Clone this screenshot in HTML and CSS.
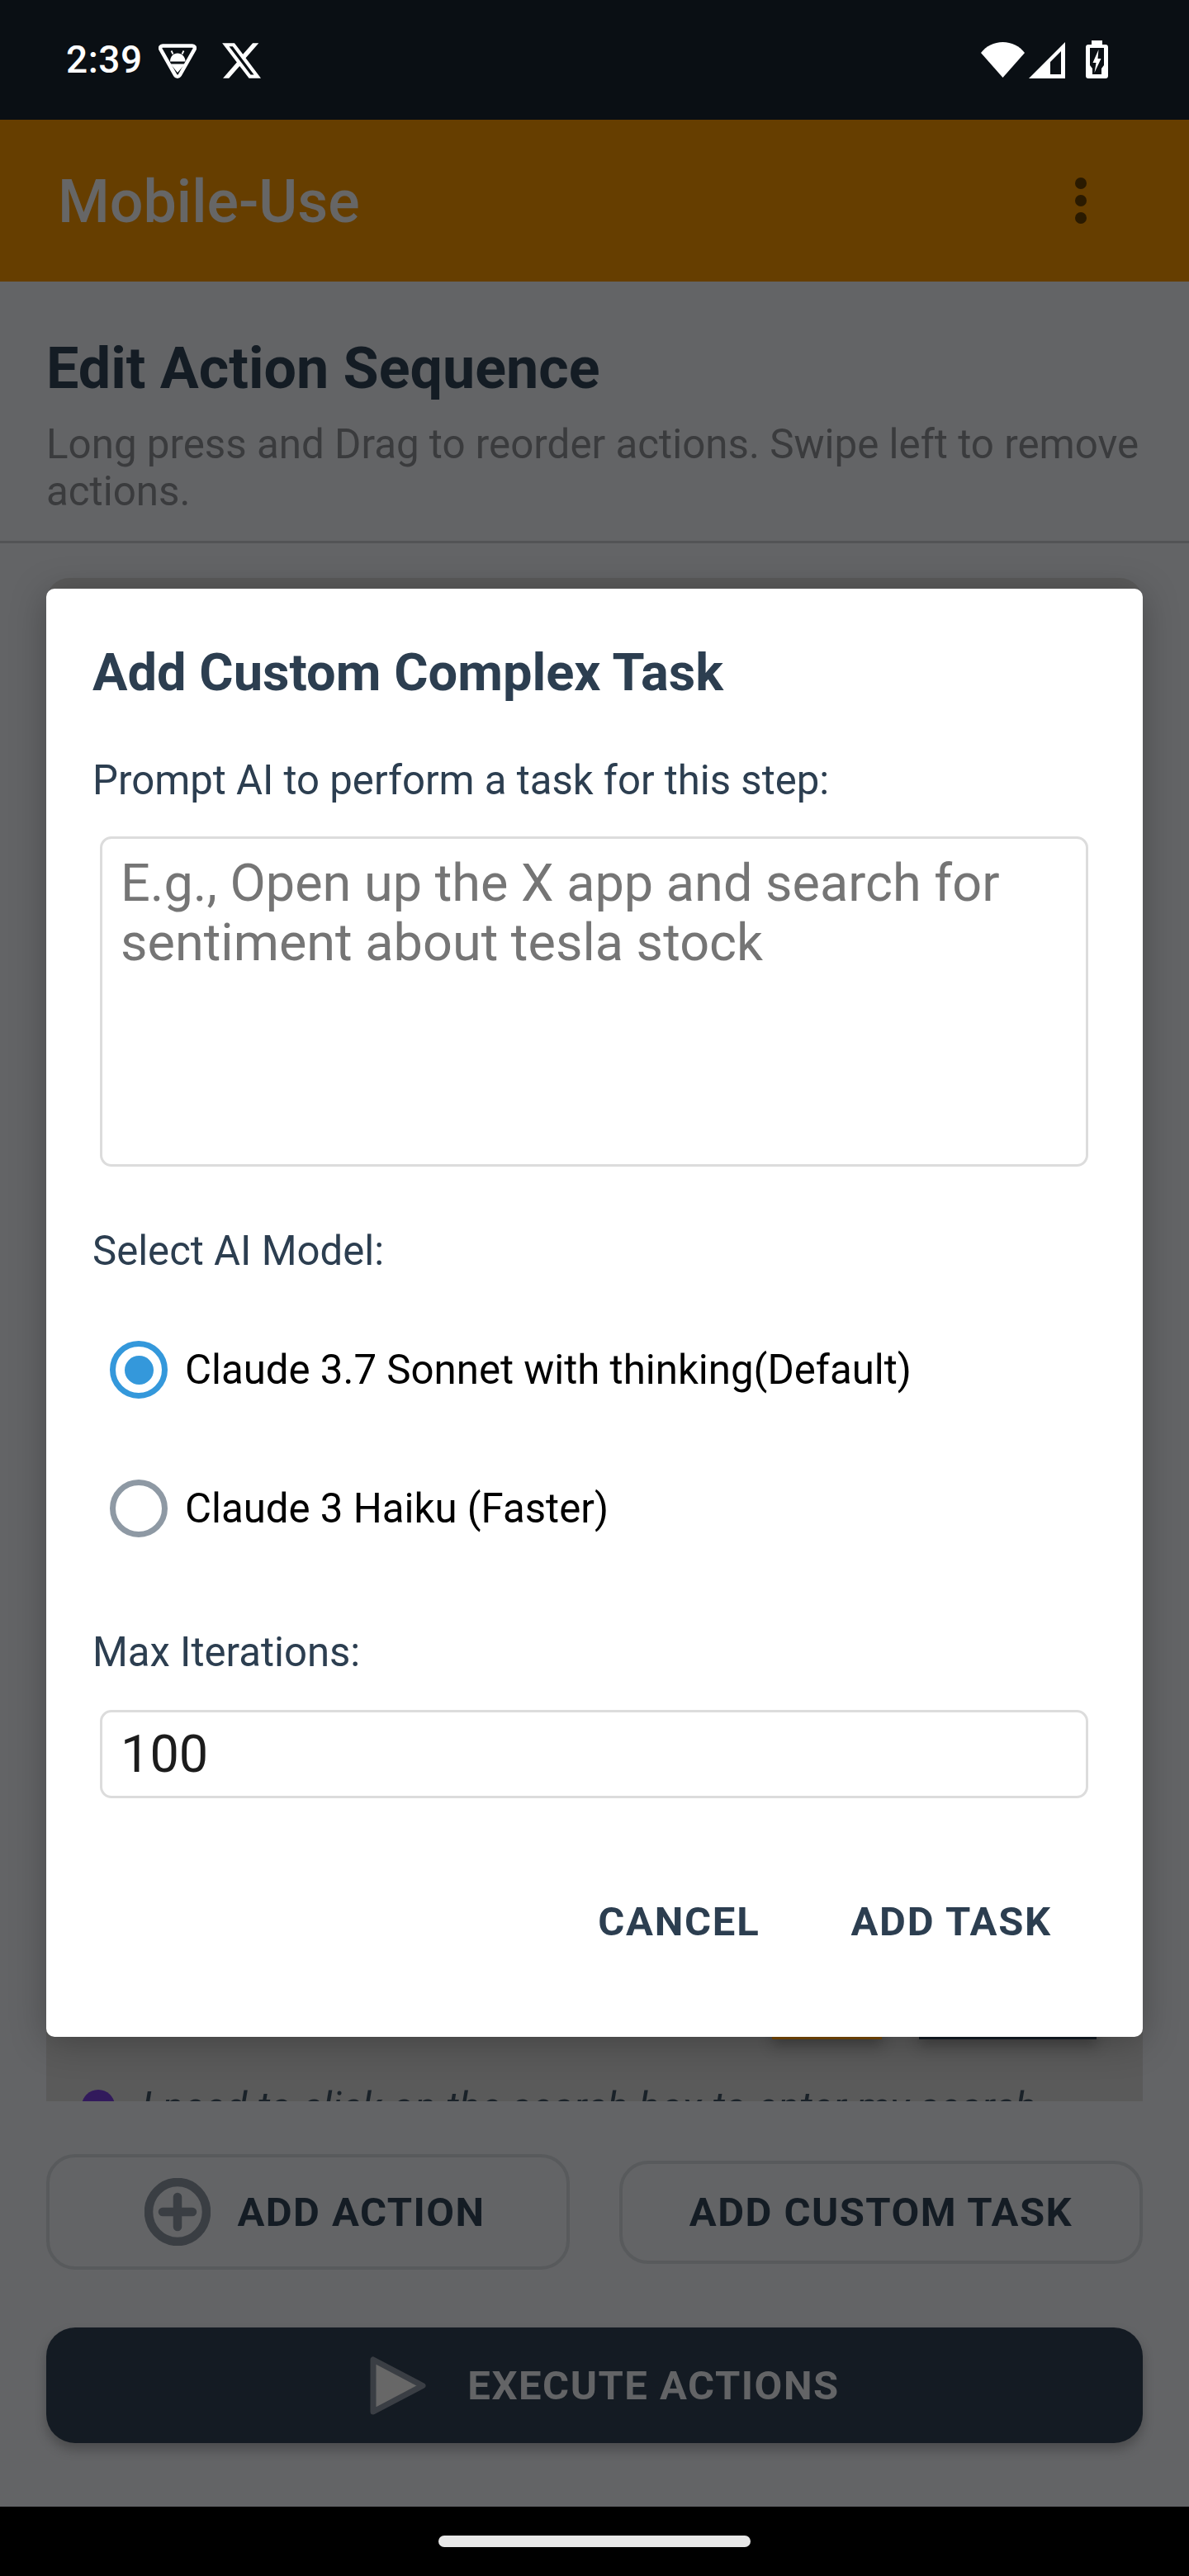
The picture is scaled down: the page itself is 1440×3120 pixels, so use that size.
FILE: index.html
```html
<!DOCTYPE html>
<html lang="en">
<head>
<meta charset="utf-8">
<title>Mobile-Use</title>
<link rel="stylesheet" href="styles.css">
</head>
<body>
<div class="phone">
  <div class="statusbar">
    <div class="status-left">
      <span class="clock">2:39</span>
      <svg class="ic-brave" viewBox="0 0 46 42"><path d="M5 2.5H41C43.5 2.5 44.6 4.8 43.4 6.8L25.8 38C24.5 40.2 21.5 40.2 20.2 38L2.6 6.8C1.4 4.8 2.5 2.5 5 2.5Z" fill="none" stroke="#fff" stroke-width="4.5" stroke-linejoin="round"/><path d="M14 21.5C14 15.5 18 11.5 23 11.5S32.5 15.5 32.5 21.5Z" fill="#fff"/><path d="M17.5 12.5L15.5 8.5M28.5 12.5L30.5 8.5" stroke="#fff" stroke-width="1.8"/><path d="M14.5 24.5H32L23 35Z" fill="#fff"/></svg>
      <svg class="ic-x" viewBox="1.2 2.2 21.6 19.6"><path fill="#fff" d="M18.244 2.25h3.308l-7.227 8.26 8.502 11.24H16.17l-5.214-6.817L4.99 21.75H1.68l7.73-8.835L1.254 2.25H8.08l4.713 6.231zm-1.161 17.52h1.833L7.084 4.126H5.117z"/></svg>
    </div>
    <div class="status-right">
      <svg class="ic-wifi" viewBox="0 0 53 43"><path fill="#fff" d="M0 13C6 5 16 0 26.5 0S47 5 53 13L26.5 43Z"/></svg>
      <svg class="ic-signal" viewBox="0 0 44 44"><path fill="#fff" fill-rule="evenodd" d="M44 0V44H0ZM39 11L26 24V39H39Z"/></svg>
      <svg class="ic-battery" viewBox="0 0 27 46"><path fill="#fff" d="M7 0H20V5H24C25.7 5 27 6.3 27 8V43C27 44.7 25.7 46 24 46H3C1.3 46 0 44.7 0 43V8C0 6.3 1.3 5 3 5H7Z"/><path fill="#0a0f14" d="M5 9H22V30L19 34V41H8V34L5 30Z"/><path fill="#fff" d="M15.5 11L8.5 27H12.5L10.5 39L18.5 22H14.5Z"/></svg>
    </div>
  </div>

  <div class="screen">
    <header class="appbar">
      <span class="appbar-title">Mobile-Use</span>
      <div class="menu"><i></i><i></i><i></i></div>
    </header>

    <section class="intro">
      <h1>Edit Action Sequence</h1>
      <p>Long press and Drag to reorder actions. Swipe left to remove actions.</p>
    </section>

    <div class="list">
      <div class="card">
        <div class="chips"><span class="chip chip-amber"></span><span class="chip chip-dark"></span></div>
        <div class="thought"><span class="dot"></span><span class="thought-text">I need to click on the search box to enter my search</span></div>
      </div>
    </div>

    <div class="add-row">
      <button class="btn-outline btn-action">
        <svg class="ic-plus" viewBox="0 0 80 82"><ellipse cx="40" cy="41" rx="35" ry="36" fill="none" stroke="#3a3e43" stroke-width="10.5"/><path d="M40 23V59M22 41H58" stroke="#3a3e43" stroke-width="10.5" stroke-linecap="round"/></svg>
        ADD ACTION
      </button>
      <button class="btn-outline btn-custom">ADD CUSTOM TASK</button>
    </div>

    <button class="btn-execute">
      <svg class="ic-play" viewBox="0 0 68 75"><path d="M4 6V69L64 37.5Z" fill="#676767" stroke="#3a3e44" stroke-width="7" stroke-linejoin="round"/></svg>
      EXECUTE ACTIONS
    </button>
  </div>

  <div class="navbar"><span class="pill"></span></div>

  <div class="dialog">
    <h2>Add Custom Complex Task</h2>
    <div class="label label-prompt">Prompt AI to perform a task for this step:</div>
    <div class="field field-area">E.g., Open up the X app and search for sentiment about tesla stock</div>
    <div class="label label-model">Select AI Model:</div>
    <div class="radios">
      <div class="radio-row"><span class="radio radio-on"></span>Claude 3.7 Sonnet with thinking(Default)</div>
      <div class="radio-row"><span class="radio"></span>Claude 3 Haiku (Faster)</div>
    </div>
    <div class="label label-iter">Max Iterations:</div>
    <div class="field field-input">100</div>
    <div class="dialog-actions"><span class="act">CANCEL</span><span class="act">ADD TASK</span></div>
  </div>
</div>
</body>
</html>
```

FILE: styles.css
```css
* { box-sizing: border-box; }
html, body { margin: 0; padding: 0; background: #000; }
body { font-family: Roboto, "Liberation Sans", sans-serif; }
button { font-family: inherit; }

.phone { position: relative; width: 1440px; height: 3120px; display: flex; flex-direction: column; overflow: hidden; }

.statusbar { flex: 0 0 145px; background: #0a0f14; display: flex; justify-content: space-between; align-items: flex-start; padding: 49px 98px 0 80px; }
.status-left { display: flex; align-items: flex-start; }
.clock { color: #fff; font-size: 46px; line-height: 46px; font-weight: 500; width: 112px; letter-spacing: .5px; }
.ic-brave { width: 46px; height: 42px; margin-top: 4px; }
.ic-x { width: 47px; height: 43px; margin-left: 31px; margin-top: 3px; }
.status-right { display: flex; align-items: flex-start; }
.ic-wifi { width: 53px; height: 43px; margin-top: 2px; }
.ic-signal { width: 44px; height: 44px; margin-left: 5px; margin-top: 2px; }
.ic-battery { width: 27px; height: 46px; margin-left: 25px; }

.screen { flex: 1; min-height: 0; display: flex; flex-direction: column; background: #636466; padding-bottom: 77px; }

.appbar { flex: 0 0 196px; background: #663e00; display: flex; align-items: center; justify-content: space-between; padding: 0 124px 0 70px; }
.appbar-title { color: #666; font-size: 71.8px; font-weight: 500; line-height: 100px; padding-top: 4px; }
.menu { display: flex; flex-direction: column; gap: 7px; }
.menu i { display: block; width: 14px; height: 14px; border-radius: 50%; background: #2a1a00; }

.intro { flex: 0 0 317px; padding: 65px 56px 0 56px; border-bottom: 3px solid #535456; }
.intro h1 { margin: 0; color: #141c24; font-size: 70px; font-weight: 700; line-height: 80px; }
.intro p { margin: 24px 0 0; color: #3a3b3d; font-size: 49.3px; line-height: 57px; }

.list { flex: 1; min-height: 0; overflow: hidden; padding: 42px 56px 0; }
.card { height: 1885px; background: #5a5a5a; border-radius: 28px 28px 0 0; display: flex; flex-direction: column; justify-content: flex-end; }
.chips { display: flex; justify-content: flex-end; gap: 45px; padding-right: 56px; }
.chip { display: block; height: 70px; box-shadow: 0 8px 16px rgba(0,0,0,.25); }
.chip-amber { width: 133px; background: #7a4a00; }
.chip-dark { width: 215px; background: #141c24; }
.thought { display: flex; gap: 32px; align-items: flex-start; padding: 61px 0 0 43px; height: 115px; }
.dot { width: 40px; height: 40px; border-radius: 50%; background: #321a5c; flex: none; }
.thought-text { color: #1a2229; font-size: 49px; font-style: italic; line-height: 44px; white-space: nowrap; }

.add-row { flex: none; display: flex; justify-content: space-between; align-items: center; padding: 64px 56px 0; }
.btn-outline { width: 634px; border: 4px solid #585a5c; border-radius: 35px; background: transparent; color: #141c24; font-size: 49px; font-weight: 700; letter-spacing: 1.45px; display: flex; align-items: center; justify-content: center; padding: 0; }
.btn-action { height: 140px; gap: 32px; padding-left: 17px; }
.btn-custom { height: 125px; }
.ic-plus { width: 80px; height: 82px; }

.btn-execute { flex: none; height: 140px; margin: 70px 56px 0; padding: 0 0 0 25px; border: 0; border-radius: 35px; background: #141b23; color: #636466; font-size: 49px; font-weight: 700; letter-spacing: 1.5px; display: flex; align-items: center; justify-content: center; gap: 50px; box-shadow: 0 8px 14px rgba(0,0,0,.25); }
.ic-play { width: 68px; height: 75px; }

.navbar { flex: 0 0 84px; background: #000; display: flex; justify-content: center; padding-top: 35px; }
.pill { width: 378px; height: 14px; border-radius: 7px; background: #e8e8e8; }

.dialog { position: absolute; left: 56px; top: 713px; width: 1328px; height: 1754px; background: #fff; border-radius: 10px; padding: 61px 56px 0; box-shadow: 0 6px 44px rgba(0,0,0,.27); }
.dialog h2 { margin: 0; color: #2c3e50; font-size: 63.2px; font-weight: 700; line-height: 80px; }
.label { color: #2c3e50; font-size: 49.1px; line-height: 60px; }
.label-prompt { margin-top: 61px; }
.label-model { margin-top: 72px; }
.label-iter { margin-top: 60px; }
.field { margin: 38px 10px 0 9px; border: 3px solid #dcdcdc; border-radius: 14px; padding: 18px 22px 0; font-size: 63px; line-height: 72px; }
.field-area { height: 400px; color: #757575; }
.field-input { height: 107px; margin-top: 40px; padding-top: 15px; color: #1c1c1c; }
.radios { margin-top: 30px; }
.radio-row { height: 168px; display: flex; align-items: center; color: #000; font-size: 49.2px; padding-left: 21px; }
.radio { width: 70px; height: 70px; border-radius: 50%; border: 7px solid #8e99a4; margin-right: 21px; flex: none; position: relative; }
.radio-on { border-color: #3498db; }
.radio-on::after { content: ""; position: absolute; left: 10.5px; top: 10.5px; width: 35px; height: 35px; border-radius: 50%; background: #3498db; }
.dialog-actions { display: flex; justify-content: flex-end; gap: 110px; margin-top: 100px; padding-right: 54px; }
.act { color: #2c3e50; font-size: 49px; font-weight: 700; line-height: 100px; letter-spacing: 1.75px; }
```
